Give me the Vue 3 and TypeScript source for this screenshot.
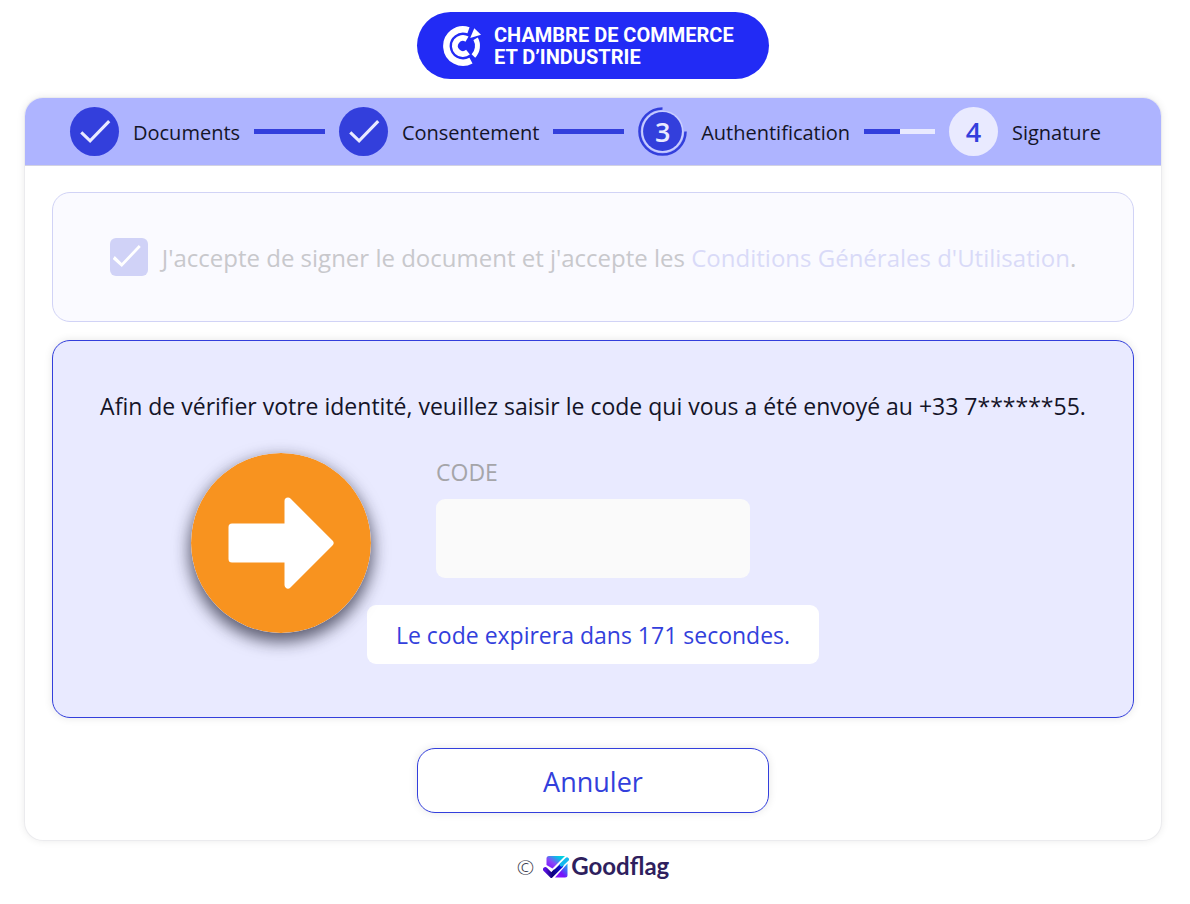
<script setup lang="ts">
import { ref } from 'vue'

type StepState = 'done' | 'current' | 'todo'
interface Step {
  label: string
  state: StepState
  progress: number
}

const steps: Step[] = [
  { label: 'Documents', state: 'done', progress: 100 },
  { label: 'Consentement', state: 'done', progress: 100 },
  { label: 'Authentification', state: 'current', progress: 50 },
  { label: 'Signature', state: 'todo', progress: 0 },
]

const accepted = ref(true)
const code = ref('')
const phone = '+33 7******55'
const secondsLeft = ref(171)
</script>

<template>
  <div class="page">
    <header class="brand">
      <svg class="brand-mark" viewBox="0 0 38 42" aria-hidden="true">
        <g fill="none" stroke="#fff">
          <path d="M25.5 5.2A16.7 16.7 0 1 0 28 35.7" stroke-width="6.5" />
          <path d="M24 14.1A8 8 0 1 0 25 27.2" stroke-width="6" />
          <path d="M32.6 13.8A14.5 14.5 0 0 1 30.4 31" stroke-width="5" />
        </g>
        <path d="M31.3 3.2 38 9.8 27.2 13Z" fill="#fff" />
      </svg>
      <p class="brand-name">CHAMBRE DE COMMERCE<br />ET D’INDUSTRIE</p>
    </header>

    <main class="card">
      <ol class="stepper">
        <template v-for="(step, i) in steps" :key="step.label">
          <li class="step">
            <span class="bullet" :class="step.state">
              <svg v-if="step.state === 'done'" class="bullet-icon" viewBox="0 0 50 50" aria-hidden="true">
                <path d="M11.5 26 20.5 34.5 40 14.5" fill="none" stroke="#e9eaff" stroke-width="3.2" />
              </svg>
              <template v-else>
                <svg v-if="step.state === 'current'" class="bullet-icon" viewBox="0 0 50 50" aria-hidden="true">
                  <circle cx="25" cy="25" r="21.5" fill="#e9eaff" fill-opacity=".45" />
                  <circle cx="25" cy="25" r="19.8" fill="#333fdc" />
                  <path d="M25 1.5A23.5 23.5 0 1 0 48.5 25" fill="none" stroke="#333fdc" stroke-width="2.6" />
                </svg>
                <span class="bullet-number">{{ i + 1 }}</span>
              </template>
            </span>
            <span class="step-label">{{ step.label }}</span>
          </li>
          <li v-if="i < steps.length - 1" class="track" aria-hidden="true">
            <span class="track-fill" :style="{ width: step.progress + '%' }"></span>
          </li>
        </template>
      </ol>

      <div class="content">
        <section class="panel consent">
          <input id="accept" v-model="accepted" class="tick" type="checkbox" disabled />
          <label for="accept">
            J'accepte de signer le document et j'accepte les
            <a href="#conditions">Conditions Générales d'Utilisation</a>.
          </label>
        </section>

        <section class="panel verify">
          <p class="prompt">
            Afin de vérifier votre identité, veuillez saisir le code qui vous a été envoyé au {{ phone }}.
          </p>
          <div class="field">
            <label for="code">CODE</label>
            <input id="code" v-model="code" type="text" inputmode="numeric" autocomplete="one-time-code" />
          </div>
          <p class="expiry">Le code expirera dans {{ secondsLeft }} secondes.</p>
          <svg class="pointer" viewBox="0 0 180 180" aria-hidden="true">
            <circle cx="90" cy="90" r="90" fill="#f8931f" />
            <path
              d="M41 74H97V48L139 90 97 132V106H41Z"
              fill="#fff"
              stroke="#fff"
              stroke-width="7"
              stroke-linejoin="round"
            />
          </svg>
        </section>

        <button class="cancel" type="button">Annuler</button>
      </div>
    </main>

    <footer class="footer">
      <span class="copyright">©</span>
      <svg class="flag-mark" viewBox="0 0 26 22" aria-hidden="true">
        <defs>
          <linearGradient id="flag-top" x1="0" y1="1" x2="1" y2="0">
            <stop offset="0" stop-color="#7a0cff" />
            <stop offset=".4" stop-color="#8a45f8" />
            <stop offset=".75" stop-color="#08bfe6" />
            <stop offset="1" stop-color="#00e0dc" />
          </linearGradient>
          <linearGradient id="flag-side" x1="0" y1="1" x2="1" y2="0">
            <stop offset="0" stop-color="#8a20ff" />
            <stop offset=".4" stop-color="#7610fa" />
            <stop offset="1" stop-color="#14b8f4" />
          </linearGradient>
          <linearGradient id="flag-tick" x1="0" y1="0" x2="1" y2="0">
            <stop offset="0" stop-color="#5a10e0" />
            <stop offset=".45" stop-color="#0a0078" />
            <stop offset="1" stop-color="#1010d8" />
          </linearGradient>
        </defs>
        <path d="M6 0H22L9.5 12.5 3.5 9V2.5Q3.5 0 6 0Z" fill="url(#flag-top)" />
        <path d="M24.5 7.5V19Q24.5 21.5 22 21.5H12Z" fill="url(#flag-side)" />
        <path d="M1.5 12.5 8.3 19 18.5 9" fill="none" stroke="#fff" stroke-width="6" />
        <path d="M2.3 13.4 8.3 19.3 18 9.6" fill="none" stroke="url(#flag-tick)" stroke-width="4.6" stroke-linecap="round" />
        <path d="M11 13 23.5 .8" fill="none" stroke="#fff" stroke-width="1.2" />
        <path d="M18.6 8.6 24 3.4" fill="none" stroke="#13b9ee" stroke-width="4" stroke-linecap="round" />
      </svg>
      <span class="flag-name">Goodflag</span>
    </footer>
  </div>
</template>

<style>
body {
  margin: 0;
  background: #fff;
}
</style>

<style scoped>
* {
  box-sizing: border-box;
}

.page {
  display: flex;
  flex-direction: column;
  align-items: center;
  padding: 12px 29px 20px 25px;
  color: #141428;
  font-family: 'Open Sans', 'Noto Sans', sans-serif;
  font-size: 23px;
  line-height: 32px;
}

p,
ol {
  margin: 0;
  padding: 0;
}

.brand {
  display: flex;
  align-items: center;
  gap: 13px;
  width: 352px;
  height: 67px;
  padding-left: 26px;
  border-radius: 34px;
  background: #222bf5;
}

.brand-mark {
  width: 38px;
  height: 42px;
}

.brand-name {
  color: #fff;
  font-family: Roboto, sans-serif;
  font-size: 20px;
  font-weight: 700;
  line-height: 22px;
  white-space: nowrap;
}

.card {
  width: 100%;
  margin-top: 19px;
  border-radius: 18px;
  background: #fff;
  box-shadow: 0 0 0 1px #ebebee, 0 0 8px rgba(0, 0, 0, 0.1);
}

.stepper {
  display: flex;
  align-items: center;
  gap: 14px;
  height: 68px;
  padding: 0 60px 0 45px;
  border-bottom: 1px solid #d2d2e2;
  border-radius: 18px 18px 0 0;
  background: #aeb4ff;
  list-style: none;
}

.step {
  display: flex;
  align-items: center;
  gap: 14px;
}

.bullet {
  display: grid;
  place-items: center;
  width: 49px;
  height: 49px;
  border-radius: 50%;
}

.bullet > * {
  grid-area: 1 / 1;
}

.bullet-icon {
  width: 49px;
  height: 49px;
}

.bullet.done {
  background: #333fdc;
}

.bullet.todo {
  background: #e9eaff;
  color: #333fdc;
}

.bullet.current {
  color: #e9eaff;
}

.bullet-number {
  z-index: 1;
  font-size: 27px;
  font-weight: 600;
}

.step-label {
  padding-top: 2px;
  font-size: 20px;
}

.track {
  flex: 1;
  height: 5px;
  background: #e9eaff;
}

.track-fill {
  display: block;
  height: 100%;
  background: #333fdc;
}

.content {
  display: flex;
  flex-direction: column;
  align-items: center;
  padding: 26px 27px 27px;
}

.panel {
  width: 100%;
  border: 1px solid #333fdc;
  border-radius: 18px;
  background: #e9eaff;
}

.consent {
  display: flex;
  align-items: center;
  justify-content: center;
  gap: 14px;
  height: 130px;
  border-color: #d1d3f6;
  background: #fafaff;
  color: #c8c8cc;
  font-size: 24px;
  white-space: nowrap;
}

.consent label {
  padding-top: 2px;
}

.consent a {
  color: #d9daf8;
  text-decoration: none;
}

.tick {
  display: grid;
  place-items: center;
  width: 38px;
  height: 38px;
  margin: 0;
  padding: 0 4px 2px 0;
  border-radius: 6px;
  background: #d0d2f7;
  appearance: none;
}

.tick:checked::before {
  width: 28px;
  height: 22px;
  background: #fff;
  clip-path: polygon(0 14px, 2px 11px, 9px 18px, 26px 0, 28px 2px, 9px 22px);
  content: '';
}

.verify {
  position: relative;
  display: flex;
  flex-direction: column;
  align-items: center;
  margin-top: 18px;
  padding: 49px 0 53px;
  box-shadow: 0 0 8px rgba(0, 0, 0, 0.1);
}

.prompt {
  white-space: nowrap;
}

.field {
  display: flex;
  flex-direction: column;
  gap: 11px;
  width: 314px;
  margin-top: 34px;
  color: #a5a5a9;
}

.field input {
  width: 100%;
  height: 79px;
  padding: 0 20px;
  border: 0;
  border-radius: 9px;
  background: #fafafa;
  color: #141428;
  font: inherit;
}

.expiry {
  width: 452px;
  margin-top: 27px;
  padding: 14px 0 13px;
  border-radius: 9px;
  background: #fff;
  color: #333fdc;
  text-align: center;
  white-space: nowrap;
}

.pointer {
  position: absolute;
  top: 112px;
  left: 138px;
  width: 180px;
  height: 180px;
  border-radius: 50%;
  box-shadow: 0 7px 16px 2px rgba(20, 20, 40, 0.65);
}

.cancel {
  width: 352px;
  height: 65px;
  margin-top: 30px;
  padding: 2px 0 0;
  border: 1px solid #333fdc;
  border-radius: 18px;
  background: #fff;
  box-shadow: 0 0 8px rgba(0, 0, 0, 0.1);
  color: #333fdc;
  font-family: inherit;
  font-size: 27px;
}

.footer {
  display: flex;
  align-items: center;
  margin-top: 10px;
}

.copyright {
  margin-right: 9px;
  color: #3c3c50;
  font-size: 21px;
  font-weight: 300;
}

.flag-mark {
  width: 26px;
  height: 22px;
}

.flag-name {
  margin-left: 2px;
  padding-bottom: 2px;
  color: #2f1f5e;
  font-family: Lato, sans-serif;
  font-size: 24px;
  font-weight: 700;
}
</style>
